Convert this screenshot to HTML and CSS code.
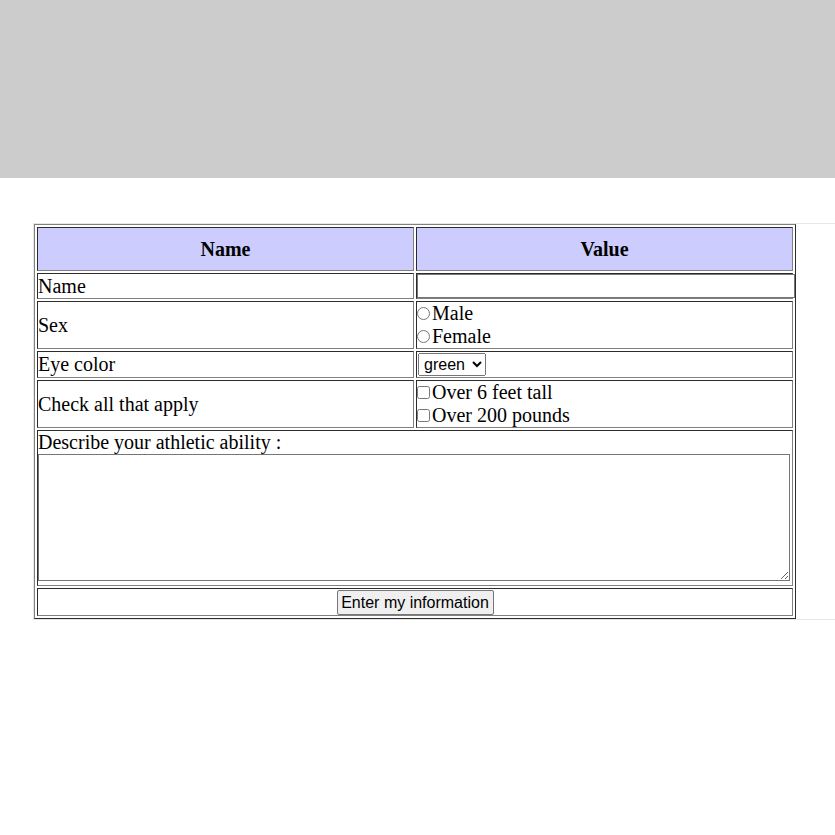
FILE: index.html
```html
<!DOCTYPE html>
<html>
<head>
<meta charset="utf-8">
<title>Form</title>
<link rel="stylesheet" href="styles.css">
</head>
<body>
<div class="banner"></div>
<div class="wrap">
<form>
<table class="info">
  <tr>
    <th class="head">Name</th>
    <th class="head">Value</th>
  </tr>
  <tr>
    <td>Name</td>
    <td><input class="text" type="text"></td>
  </tr>
  <tr>
    <td>Sex</td>
    <td><input class="opt" type="radio" name="sex">Male<br><input class="opt" type="radio" name="sex">Female</td>
  </tr>
  <tr>
    <td>Eye color</td>
    <td><select class="sel"><option>green</option><option>blue</option><option>brown</option></select></td>
  </tr>
  <tr>
    <td>Check all that apply</td>
    <td><input class="opt" type="checkbox">Over 6 feet tall<br><input class="opt" type="checkbox">Over 200 pounds</td>
  </tr>
  <tr>
    <td colspan="2">Describe your athletic ability :<br><textarea class="area"></textarea></td>
  </tr>
  <tr>
    <td colspan="2" class="center"><button type="button" class="btn">Enter my information</button></td>
  </tr>
</table>
</form>
</div>
</body>
</html>
```

FILE: styles.css
```css
html, body {
  margin: 0;
  padding: 0;
  background: #ffffff;
  overflow-x: hidden;
}
body {
  font-family: "Liberation Serif", "Times New Roman", serif;
  font-size: 20px;
  line-height: 23px;
  color: #000;
}
.banner {
  height: 178px;
  background: #cccccc;
}
.wrap {
  margin-top: 45px;
  margin-left: 33px;
  width: 900px;
  border-top: 1px solid #e6e6e6;
  border-left: 1px solid #e6e6e6;
  border-bottom: 1px solid #e6e6e6;
}
form {
  margin: 0;
}
.info {
  width: 762px;
  border: 1px outset grey;
  border-spacing: 2px;
  table-layout: fixed;
}
.info td, .info th {
  border: 1px inset grey;
  padding: 0;
}
.info th.head {
  background: #ccccff;
  font-weight: bold;
  height: 42px;
  padding: 0;
  line-height: 23px;
}
.text {
  font-family: Arial, "Liberation Sans", sans-serif;
  font-size: 16px;
  padding: 1px 2px;
  border: 1px solid #767676;
  margin: 0;
  height: 24px;
  box-sizing: border-box;
  width: calc(100% + 3px);
  vertical-align: top;
}
.opt {
  margin: 3px 2px 0 0;
  width: 13px;
  height: 13px;
}
.sel {
  font-family: Arial, "Liberation Sans", sans-serif;
  font-size: 16px;
  margin: 1px 0 1px 1px;
  height: 23px;
  padding: 0 1px;
  vertical-align: top;
}
.area {
  box-sizing: border-box;
  width: calc(100% - 2px);
  height: 127px;
  margin: 0 0 4px 0;
  border: 1px solid #767676;
  vertical-align: top;
}
.center {
  text-align: center;
}
.btn {
  font-family: Arial, "Liberation Sans", sans-serif;
  font-size: 16px;
  padding: 2px 2px;
  margin: 1px 0 0 0;
  border: 1px solid #767676;
  border-radius: 2px;
  background: #efefef;
  color: #000;
  width: 157px;
  height: 25px;
  vertical-align: top;
}
```
